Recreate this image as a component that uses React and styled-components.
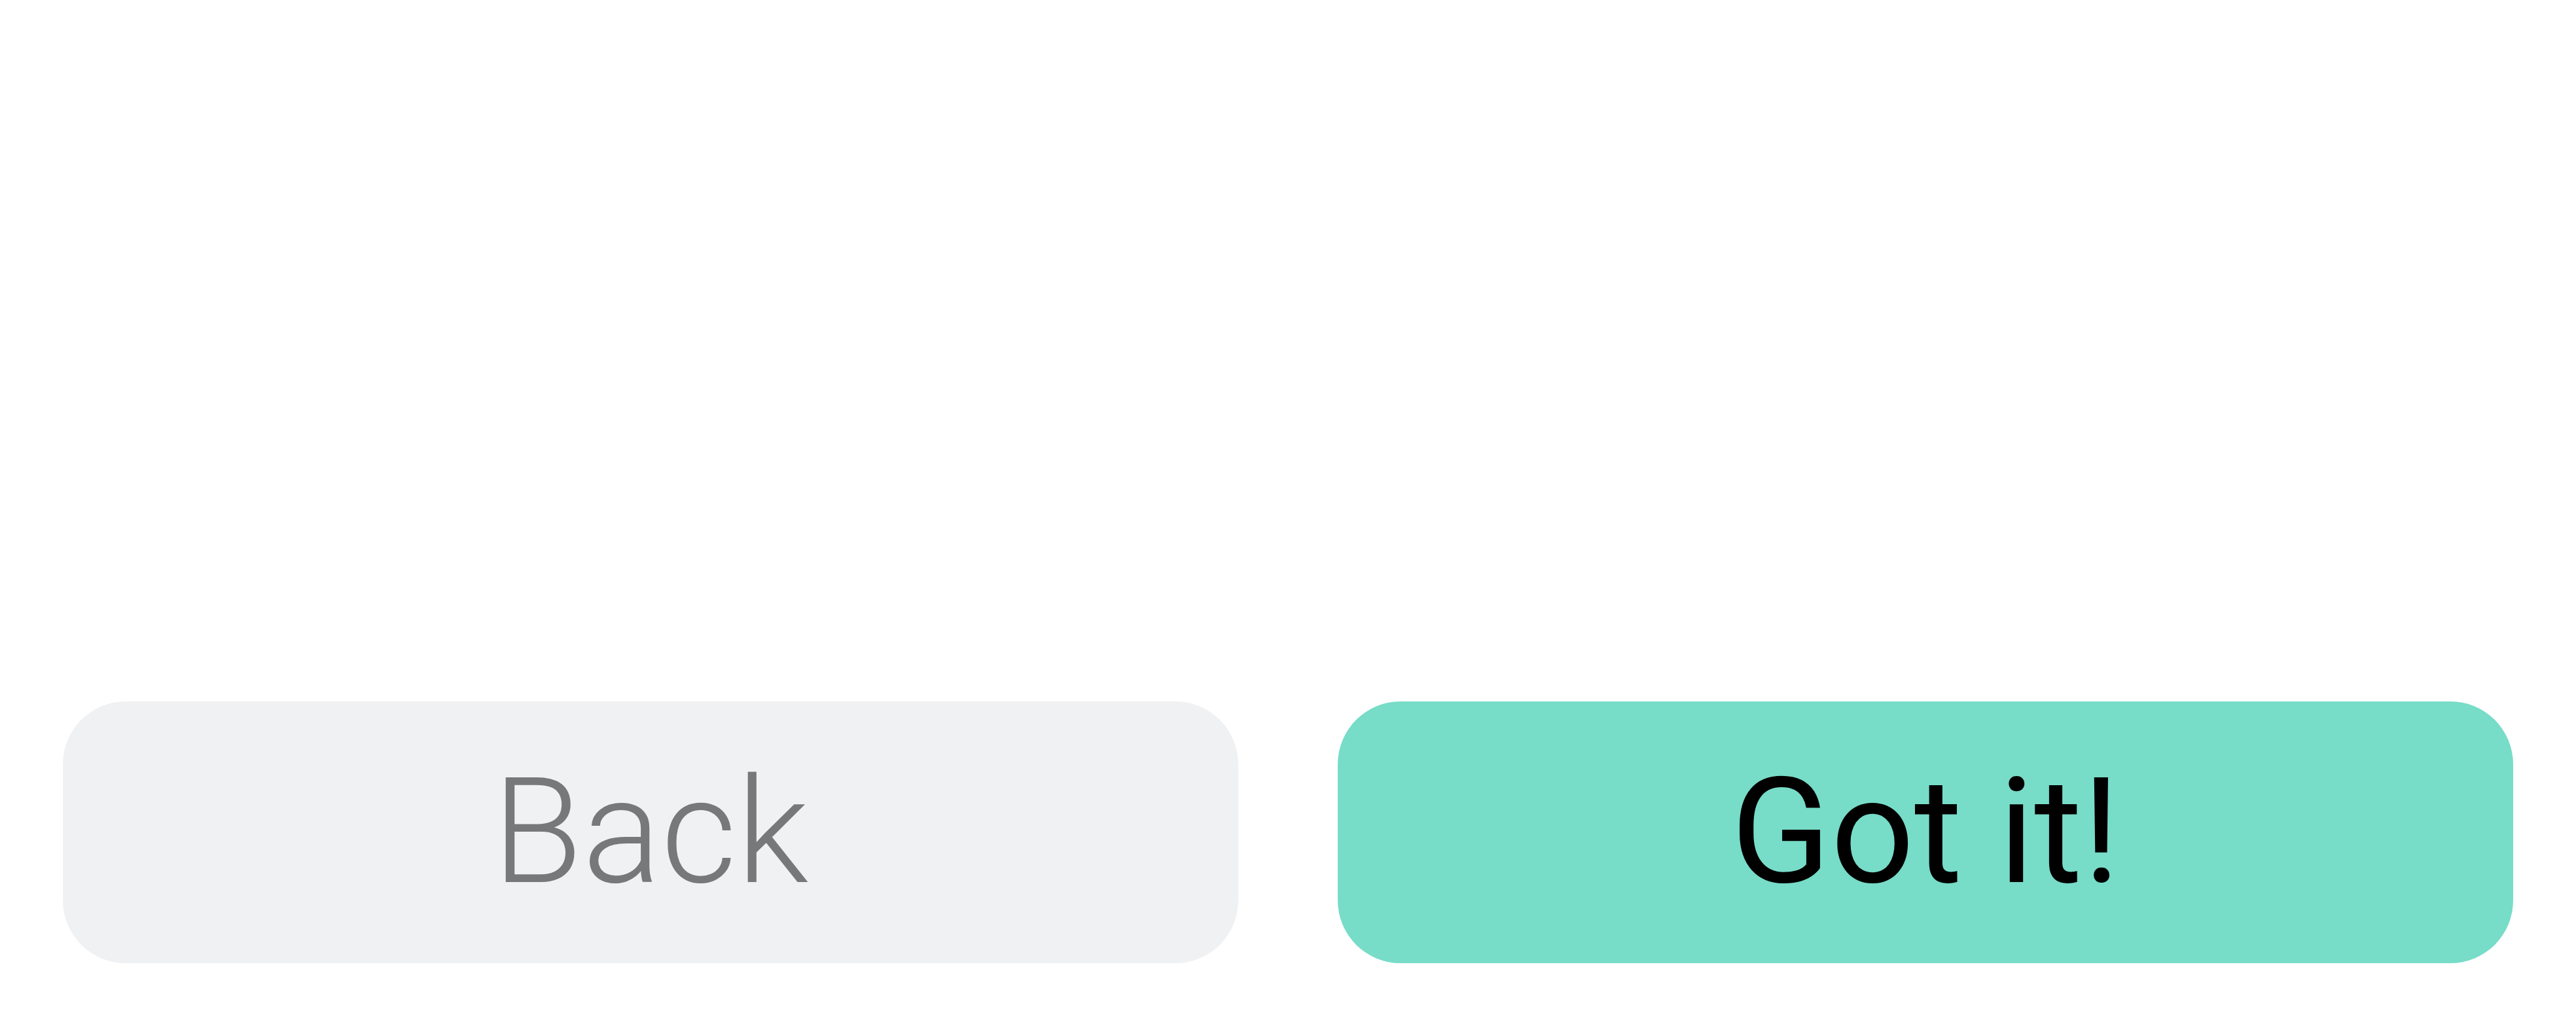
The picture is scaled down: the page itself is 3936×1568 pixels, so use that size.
import styled, { createGlobalStyle } from "styled-components";

const GlobalStyle = createGlobalStyle`
  * {
    box-sizing: border-box;
  }
  html, body {
    margin: 0;
    padding: 0;
    background-color: #ffffff;
  }
  body {
    font-family: Roboto, "Liberation Sans", sans-serif;
  }
`;

const Screen = styled.div`
  width: 3936px;
  height: 1568px;
  display: flex;
  flex-direction: column;
  justify-content: flex-end;
  padding: 0 96px 96px;
  background-color: #ffffff;
`;

const ButtonRow = styled.div`
  display: grid;
  grid-template-columns: 1fr 1fr;
  gap: 152px;
`;

const ActionButton = styled.button`
  height: 400px;
  border: none;
  border-radius: 96px;
  display: flex;
  align-items: center;
  justify-content: center;
  font-family: Roboto, "Liberation Sans", sans-serif;
  font-size: 224px;
  line-height: 1;
  padding: 0;
  cursor: pointer;
  background-color: ${(p) => (p.$primary ? "#77dcc8" : "#f0f1f3")};
  color: ${(p) => (p.$primary ? "#000000" : "#77787a")};
  font-weight: ${(p) => (p.$primary ? 400 : 300)};
`;

const App = () => {
  return (
    <>
      <GlobalStyle />
      <Screen>
        <ButtonRow>
          <ActionButton>Back</ActionButton>
          <ActionButton $primary>Got it!</ActionButton>
        </ButtonRow>
      </Screen>
    </>
  );
};

export default App;
